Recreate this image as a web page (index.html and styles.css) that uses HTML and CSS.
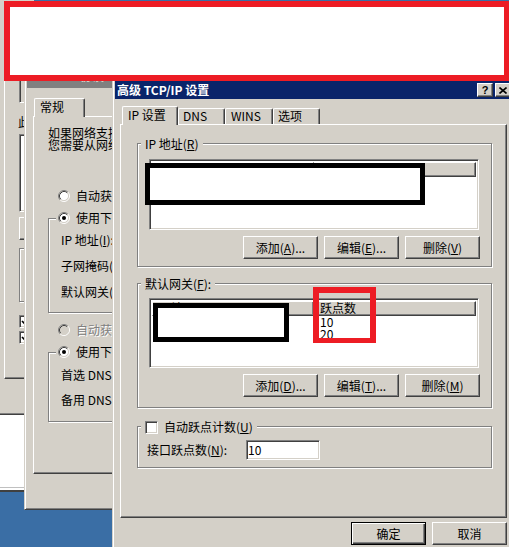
FILE: index.html
```html
<!DOCTYPE html>
<html lang="zh-CN">
<head>
<meta charset="utf-8">
<title>高级 TCP/IP 设置</title>
<link rel="stylesheet" href="styles.css">
</head>
<body>
<div class="desktop">

  <div class="win-d"></div>

  <div class="win-a">
    <div class="a-page">
      <div class="a-box sunken gray"></div>
      <div class="a-label">此连</div>
      <div class="a-list sunken"></div>
      <div class="a-btn raised"></div>
      <div class="a-group etched"></div>
      <div class="a-chk"><span class="chk"><svg width="9" height="9" viewBox="0 0 9 9"><path d="M1 4 L3.5 6.5 L8 2" fill="none" stroke="#000" stroke-width="1.7"/></svg></span></div>
      <div class="a-chk a-chk2"><span class="chk"><svg width="9" height="9" viewBox="0 0 9 9"><path d="M1 4 L3.5 6.5 L8 2" fill="none" stroke="#000" stroke-width="1.7"/></svg></span></div>
    </div>
  </div>

  <div class="win win-b">
    <div class="titlebar inactive"><span class="title">Internet 协议</span></div>
    <div class="wbody wbody-b">
      <div class="tabs tabs-b">
        <div class="tab sel tab-gen">常规</div>
      </div>
      <div class="page page-b">
        <div class="line">如果网络支持</div>
        <div class="line">您需要从网络</div>
        <div class="rrow rrow-first">
          <svg class="radio" width="12" height="12" viewBox="0 0 12 12"><circle cx="6" cy="6" r="4.5" fill="#fff"/><path d="M2.11 9.89A5.5 5.5 0 0 1 9.89 2.11" fill="none" stroke="#808080"/><path d="M9.89 2.11A5.5 5.5 0 0 1 2.11 9.89" fill="none" stroke="#fff"/><path d="M2.82 9.18A4.5 4.5 0 0 1 9.18 2.82" fill="none" stroke="#404040"/><path d="M9.18 2.82A4.5 4.5 0 0 1 2.82 9.18" fill="none" stroke="#d4d0c8"/></svg>
          <span>自动获得</span>
        </div>
        <div class="group etched g-ip">
          <div class="legend legend-r">
            <svg class="radio" width="12" height="12" viewBox="0 0 12 12"><circle cx="6" cy="6" r="4.5" fill="#fff"/><path d="M2.11 9.89A5.5 5.5 0 0 1 9.89 2.11" fill="none" stroke="#808080"/><path d="M9.89 2.11A5.5 5.5 0 0 1 2.11 9.89" fill="none" stroke="#fff"/><path d="M2.82 9.18A4.5 4.5 0 0 1 9.18 2.82" fill="none" stroke="#404040"/><path d="M9.18 2.82A4.5 4.5 0 0 1 2.82 9.18" fill="none" stroke="#d4d0c8"/><circle cx="6" cy="6" r="2" fill="#000"/></svg>
            <span>使用下面</span>
          </div>
          <div class="frow">IP 地址(<u>I</u>):</div>
          <div class="frow">子网掩码(<u>U</u>):</div>
          <div class="frow frow-last">默认网关(<u>D</u>):</div>
        </div>
        <div class="rrow rrow-dis">
          <svg class="radio" width="12" height="12" viewBox="0 0 12 12"><circle cx="6" cy="6" r="4.5" fill="#d4d0c8"/><path d="M2.11 9.89A5.5 5.5 0 0 1 9.89 2.11" fill="none" stroke="#808080"/><path d="M9.89 2.11A5.5 5.5 0 0 1 2.11 9.89" fill="none" stroke="#fff"/><path d="M2.82 9.18A4.5 4.5 0 0 1 9.18 2.82" fill="none" stroke="#404040"/><path d="M9.18 2.82A4.5 4.5 0 0 1 2.82 9.18" fill="none" stroke="#d4d0c8"/></svg>
          <span class="disabled">自动获得</span>
        </div>
        <div class="group etched g-dns">
          <div class="legend legend-r">
            <svg class="radio" width="12" height="12" viewBox="0 0 12 12"><circle cx="6" cy="6" r="4.5" fill="#fff"/><path d="M2.11 9.89A5.5 5.5 0 0 1 9.89 2.11" fill="none" stroke="#808080"/><path d="M9.89 2.11A5.5 5.5 0 0 1 2.11 9.89" fill="none" stroke="#fff"/><path d="M2.82 9.18A4.5 4.5 0 0 1 9.18 2.82" fill="none" stroke="#404040"/><path d="M9.18 2.82A4.5 4.5 0 0 1 2.82 9.18" fill="none" stroke="#d4d0c8"/><circle cx="6" cy="6" r="2" fill="#000"/></svg>
            <span>使用下面</span>
          </div>
          <div class="frow frow-d1">首选 DNS 服务</div>
          <div class="frow frow-d2">备用 DNS 服务</div>
        </div>
      </div>
    </div>
  </div>

  <div class="win win-c">
    <div class="titlebar">
      <span class="title">高级 TCP/IP 设置</span>
      <span class="tbtns">
        <span class="tbtn raised">?</span>
        <span class="tbtn raised"><svg width="8" height="7" viewBox="0 0 8 7"><path d="M0.5 0.5 L7.5 6.5 M7.5 0.5 L0.5 6.5" stroke="#000" stroke-width="1.6" fill="none"/></svg></span>
      </span>
    </div>
    <div class="wbody wbody-c">
      <div class="tabs tabs-c">
        <div class="tab sel tab-ip">IP 设置</div>
        <div class="tab tab-dns">DNS</div>
        <div class="tab tab-wins">WINS</div>
        <div class="tab tab-opt">选项</div>
      </div>
      <div class="page page-c">
        <div class="group etched g1">
          <div class="legend legend-t">IP 地址(<u>R</u>)</div>
          <div class="list sunken list1">
            <div class="lhead"><div></div><div></div></div>
          </div>
          <div class="btnrow">
            <div class="btn raised">添加(<u>A</u>)...</div>
            <div class="btn raised">编辑(<u>E</u>)...</div>
            <div class="btn raised">删除(<u>V</u>)</div>
          </div>
        </div>

        <div class="group etched g2">
          <div class="legend legend-t">默认网关(<u>F</u>):</div>
          <div class="list sunken list2">
            <div class="lhead"><div>网关</div><div>跃点数</div></div>
            <div class="lrow"><div></div><div>10</div></div>
            <div class="lrow"><div></div><div>20</div></div>
          </div>
          <div class="btnrow">
            <div class="btn raised">添加(<u>D</u>)...</div>
            <div class="btn raised">编辑(<u>T</u>)...</div>
            <div class="btn raised">删除(<u>M</u>)</div>
          </div>
        </div>

        <div class="group etched g3">
          <div class="legend legend-c">
            <span class="chk"></span>
            <span>自动跃点计数(<u>U</u>)</span>
          </div>
          <div class="metric-row">
            <span class="metric-label">接口跃点数(<u>N</u>):</span>
            <span class="field sunken">10</span>
          </div>
        </div>
      </div>
      <div class="dlg-btns">
        <div class="btn raised default">确定</div>
        <div class="btn raised">取消</div>
      </div>
    </div>
  </div>

  <div class="mark red-top"></div>
  <div class="mark redact b1"></div>
  <div class="mark redact b2"></div>
  <div class="mark red-box r2"></div>

</div>
</body>
</html>
```
FILE: styles.css
```css
* { box-sizing: border-box; }
html, body { margin: 0; padding: 0; }
body {
  width: 509px;
  height: 547px;
  overflow: hidden;
  background: #3a6ea5;
  font-family: "Noto Sans CJK SC", "Noto Sans", sans-serif;
  font-size: 12px;
  line-height: 14px;
  color: #000;
}
u { text-decoration: underline; text-underline-offset: 1px; }

.desktop {
  position: relative;
  width: 509px;
  height: 547px;
  overflow: hidden;
  background: #3a6ea5;
}

/* ---------- 3D primitives ---------- */
.raised {
  background: #d4d0c8;
  border: 1px solid;
  border-color: #fff #404040 #404040 #fff;
  box-shadow: inset -1px -1px #808080;
}
.sunken {
  background: #fff;
  border: 1px solid;
  border-color: #808080 #fff #fff #808080;
  box-shadow: inset 1px 1px #404040, inset -1px -1px #d4d0c8;
}
.sunken.gray { background: #d4d0c8; }
.etched {
  border: 1px solid #808080;
  box-shadow: inset 1px 1px #fff, 1px 1px #fff;
}

/* ---------- background windows ---------- */
.win-d {
  position: absolute;
  left: -4px;
  top: 415px;
  width: 40px;
  height: 77px;
  background: #fff;
  border-bottom: 2px solid #404040;
  box-shadow: inset 0 -2px #fff, inset 0 -3px #c0c0c0;
}
.win-a {
  position: absolute;
  left: -6px;
  top: 0;
  width: 40px;
  height: 415px;
  overflow: hidden;
  background: #d4d0c8;
  border-bottom: 1px solid #404040;
  box-shadow: inset 0 -1px #808080;
  padding: 40px 0 0 10px;
}
.a-page {
  height: 339px;
  border-left: 1px solid #fff;
  border-bottom: 1px solid #404040;
  box-shadow: inset 0 -1px #808080;
  padding: 19px 0 0 14px;
}
.a-box { width: 200px; height: 44px; }
.a-label { margin: 12px 0 0 -1px; white-space: nowrap; }
.a-list { width: 200px; height: 78px; margin-top: 5px; }
.a-btn { width: 75px; height: 23px; margin-top: 5px; }
.a-group { width: 200px; height: 54px; margin-top: 8px; }
.a-chk { margin-top: 12px; height: 13px; }
.a-chk2 { margin-top: 3px; }

/* ---------- window frame ---------- */
.win {
  position: absolute;
  background: #d4d0c8;
  border: 1px solid;
  border-color: #d4d0c8 #404040 #404040 #d4d0c8;
  box-shadow: inset 1px 1px #fff, inset -1px -1px #808080;
  padding: 2px;
  display: flex;
  flex-direction: column;
  overflow: hidden;
}
.win-b { left: 24px; top: 67px; width: 100px; height: 443px; }
.win-c { left: 112px; top: 78px; width: 403px; height: 480px; }

.titlebar {
  height: 18px;
  flex: none;
  display: flex;
  align-items: center;
  padding: 0 1px 0 2px;
  background: #0a246a;
  color: #fff;
  font-weight: bold;
  white-space: nowrap;
  overflow: hidden;
}
.titlebar.inactive {
  background: #808080;
  color: #d4d0c8;
  padding-bottom: 6px;
}
.title { flex: 1; overflow: hidden; }
.tbtns { display: flex; gap: 2px; }
.tbtn {
  width: 16px;
  height: 14px;
  display: flex;
  align-items: center;
  justify-content: center;
  color: #000;
  font-family: "Liberation Sans", sans-serif;
  font-weight: bold;
  font-size: 11px;
  line-height: 12px;
}

.wbody-b { padding: 10px 0 0 6px; }
.wbody-c { padding: 7px 5px 0 5px; }

/* ---------- tabs ---------- */
.tabs { display: flex; align-items: flex-end; height: 18px; }
.tabs-b { padding-left: 1px; }
.tabs-c { padding-left: 2px; }
.tab {
  height: 16px;
  padding-left: 4px;
  border-top: 1px solid #fff;
  border-left: 1px solid #fff;
  border-right: 1px solid #404040;
  border-radius: 2px 2px 0 0;
  box-shadow: inset -1px 0 #808080;
  line-height: 14px;
  white-space: nowrap;
}
.tab.sel {
  height: 19px;
  margin-bottom: -1px;
  position: relative;
  z-index: 1;
  background: #d4d0c8;
  padding-left: 5px;
  line-height: 16px;
}
.tab-gen { width: 51px; padding-left: 6px; }
.tab-ip { width: 56px; }
.tab-dns { width: 47px; }
.tab-wins { width: 48px; padding-left: 5px; }
.tab-opt { width: 47px; }

.page {
  border: 1px solid;
  border-color: #fff #404040 #404040 #fff;
  box-shadow: inset -1px -1px #808080;
}
.page-b { width: 380px; height: 358px; padding: 10px 0 0 14px; }
.page-c { height: 394px; padding: 18px 0 0 16px; }

/* ---------- groups ---------- */
.legend {
  display: flex;
  align-items: center;
  width: max-content;
  height: 14px;
  background: #d4d0c8;
  white-space: nowrap;
}
.legend-t { margin: -7px 0 0 3px; padding: 0 4px 0 4px; }
.legend-c { margin: -7px 0 0 3px; padding: 0 4px; gap: 6px; }
.legend-r { margin: -8px 0 0 7px; padding: 0 2px; gap: 6px; }

/* window B contents (only the left strip shows beside window C) */
.line { line-height: 12px; white-space: nowrap; }
.rrow { display: flex; align-items: center; gap: 6px; height: 14px; white-space: nowrap; padding-left: 10px; }
.rrow-first { margin-top: 38px; }
.rrow-dis { margin-top: 10px; }
.radio { flex: none; display: block; }
.disabled { color: #808080; text-shadow: 1px 1px #fff; }
.g-ip { width: 360px; height: 95px; margin-top: 15px; }
.g-dns { width: 360px; height: 70px; margin-top: 15px; }
.frow {
  height: 22px;
  margin: 4px 0 0 12px;
  display: flex;
  align-items: center;
  white-space: nowrap;
}
.frow-d1 { margin-top: 5px; }
.frow-d2 { margin-top: 3px; }

/* window C contents */
.g1 { width: 355px; height: 124px; }
.g2 { width: 355px; height: 125px; margin-top: 16px; }
.g3 { width: 355px; height: 42px; margin-top: 18px; }

.list { width: 330px; padding: 2px; overflow: hidden; }
.list1 { height: 71px; margin: 8px 0 0 11px; }
.list2 { height: 70px; margin: 7px 0 0 11px; }
.lhead { display: grid; grid-template-columns: 162px 1fr; height: 15px; }
.lhead > div {
  background: #d4d0c8;
  border: 1px solid;
  border-color: #fff #404040 #404040 #fff;
  box-shadow: inset -1px -1px #808080;
  padding-left: 5px;
  line-height: 12px;
  white-space: nowrap;
  overflow: hidden;
}
.lrow { display: grid; grid-template-columns: 162px 1fr; height: 12px; line-height: 12px; }
.lrow > div:nth-child(2) { padding-left: 6px; }

.btnrow {
  display: flex;
  justify-content: flex-end;
  gap: 6px;
  margin-top: 6px;
  padding-right: 11px;
}
.btn {
  width: 75px;
  height: 23px;
  display: flex;
  align-items: center;
  justify-content: center;
  white-space: nowrap;
}
.btn.default {
  border: 1px solid #000;
  box-shadow: inset 1px 1px #fff, inset -1px -1px #404040, inset -2px -2px #808080;
}

.chk {
  display: inline-flex;
  align-items: center;
  justify-content: center;
  flex: none;
  width: 13px;
  height: 13px;
  background: #fff;
  border: 1px solid;
  border-color: #808080 #fff #fff #808080;
  box-shadow: inset 1px 1px #404040, inset -1px -1px #d4d0c8;
}

.metric-row {
  display: flex;
  align-items: center;
  height: 20px;
  margin: 6px 0 0 9px;
  white-space: nowrap;
}
.metric-label { width: 99px; }
.field {
  width: 74px;
  height: 20px;
  padding-left: 1px;
  line-height: 18px;
}

.dlg-btns {
  display: flex;
  justify-content: flex-end;
  gap: 6px;
  margin-top: 4px;
}

/* ---------- annotations drawn over the screenshot ---------- */
.mark { position: absolute; }
.red-top {
  left: 4px;
  top: 1px;
  width: 506px;
  height: 80px;
  border: 6px solid #ed1c24;
  background: #fff;
}
.redact { border: 5px solid #000; background: #fff; }
.b1 { left: 145px; top: 163px; width: 280px; height: 42px; }
.b2 { left: 153px; top: 303px; width: 136px; height: 39px; }
.red-box { border: 6px solid #ed1c24; border-bottom-width: 5px; }
.r2 { left: 313px; top: 287px; width: 63px; height: 56px; }
```
